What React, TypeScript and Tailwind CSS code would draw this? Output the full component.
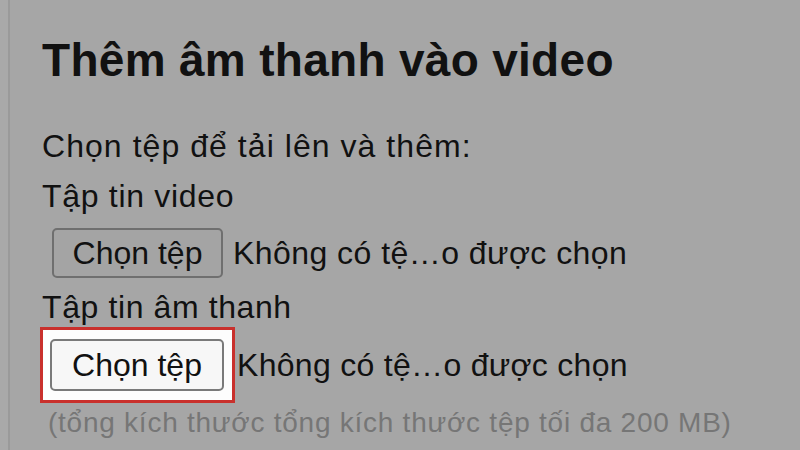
import React from "react";

const font = { fontFamily: '"Liberation Sans", Arial, Helvetica, sans-serif' };

export default function App() {
  return (
    <div className="flex h-[450px] w-[800px] overflow-hidden bg-[#a6a6a6]" style={font}>
      <div className="w-[8px] shrink-0 bg-[#a9a9a9]" />
      <div className="w-[2px] shrink-0 bg-[#9a9a9a]" />
      <div className="flex flex-1 flex-col pl-[32px] text-[#111]">
        <h1 className="mt-[37px] text-[46px] font-bold leading-[46px] tracking-[0.3px]">Thêm âm thanh vào video</h1>
        <p className="mt-[38px] text-[32px] leading-[50px] tracking-[1.05px]">Chọn tệp để tải lên và thêm:</p>
        <p className="text-[32px] leading-[50px] tracking-[0.7px]">Tập tin video</p>
        <div className="mt-[7px] flex h-[50px] items-center">
          <button className="ml-[10px] flex h-[50px] w-[171px] items-center justify-center rounded-[5px] border-2 border-[#6f6f6f] bg-[#a4a4a4] text-[32px] leading-[32px] text-[#111]">
            Chọn tệp
          </button>
          <span className="ml-[10px] text-[32px] leading-[32px] tracking-[0.45px]">Không có tệ…o được chọn</span>
        </div>
        <p className="mt-[9px] text-[32px] leading-[40px] tracking-[0.6px]">Tập tin âm thanh</p>
        <div className="flex h-[76px] items-center">
          <div className="-ml-[2px] border-[3px] border-[#c9302c] bg-[#fdfdfd] pb-[9px] pl-[7px] pr-[8px] pt-[9px]">
            <button className="flex h-[52px] w-[174px] items-center justify-center rounded-[5px] border-2 border-[#7a7a7a] bg-[#f7f7f7] text-[32px] leading-[32px] text-[#111]">
              Chọn tệp
            </button>
          </div>
          <span className="ml-[2px] text-[32px] leading-[32px] tracking-[0.3px]">Không có tệ…o được chọn</span>
        </div>
        <p className="ml-[6px] whitespace-nowrap text-[28px] leading-[40px] tracking-[0.75px] text-[#767676]">
          (tổng kích thước tổng kích thước tệp tối đa 200 MB)
        </p>
      </div>
    </div>
  );
}
